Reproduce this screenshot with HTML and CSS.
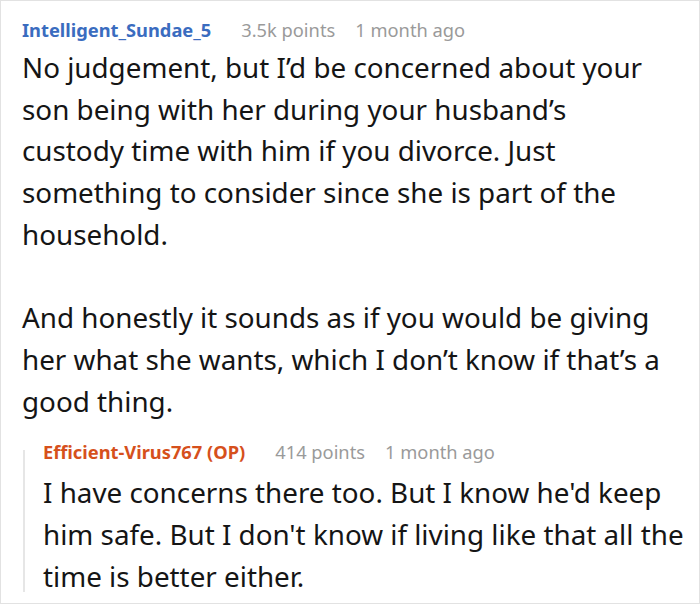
FILE: index.html
```html
<!DOCTYPE html>
<html>
<head>
<meta charset="utf-8">
<link rel="stylesheet" href="styles.css">
</head>
<body>
<div class="frame">
  <div class="comment">
    <div class="meta">
      <span class="user user-blue">Intelligent_Sundae_5</span>
      <span class="info">3.5k points</span>
      <span class="info">1 month ago</span>
    </div>
    <div class="body">
      <p>No judgement, but I’d be concerned about your<br>son being with her during your husband’s<br>custody time with him if you divorce. Just<br>something to consider since she is part of the<br>household.</p>
      <p>And honestly it sounds as if you would be giving<br>her what she wants, which I don’t know if that’s a<br>good thing.</p>
    </div>
    <div class="reply">
      <div class="meta meta-reply">
        <span class="user user-orange">Efficient-Virus767 (OP)</span>
        <span class="info">414 points</span>
        <span class="info">1 month ago</span>
      </div>
      <div class="body">
        <p>I have concerns there too. But I know he'd keep<br>him safe. But I don't know if living like that all the<br>time is better either.</p>
      </div>
    </div>
  </div>
</div>
</body>
</html>
```
FILE: styles.css
```css
html, body {
  margin: 0;
  padding: 0;
  background: #fff;
}
.frame {
  width: 700px;
  height: 604px;
  box-sizing: border-box;
  border: 1px solid #e2e2e2;
  overflow: hidden;
  font-family: "Noto Sans", "Open Sans", sans-serif;
  color: #151515;
}
.comment {
  padding: 12px 10px 0 21px;
}
.meta {
  display: flex;
  align-items: baseline;
  height: 34px;
  line-height: 34px;
  font-size: 18.3px;
  white-space: nowrap;
}
.user {
  font-weight: 700;
  margin-right: 30px;
}
.user-blue { color: #3a6cbf; }
.user-orange { color: #d6501c; }
.info {
  color: #9a9a9a;
  margin-right: 20px;
}
.body p {
  margin: 0 0 41.7px 0;
  font-size: 27.8px;
  line-height: 41.7px;
  white-space: nowrap;
}
.body p:last-child {
  margin-bottom: 0;
}
.reply {
  position: relative;
  margin-top: 12px;
  padding-left: 21px;
}
.reply::before {
  content: "";
  position: absolute;
  left: 1px;
  top: 16px;
  bottom: 5px;
  width: 2px;
  background: #e6e6e6;
}
.meta-reply {
  height: 38px;
  line-height: 36px;
}
```
